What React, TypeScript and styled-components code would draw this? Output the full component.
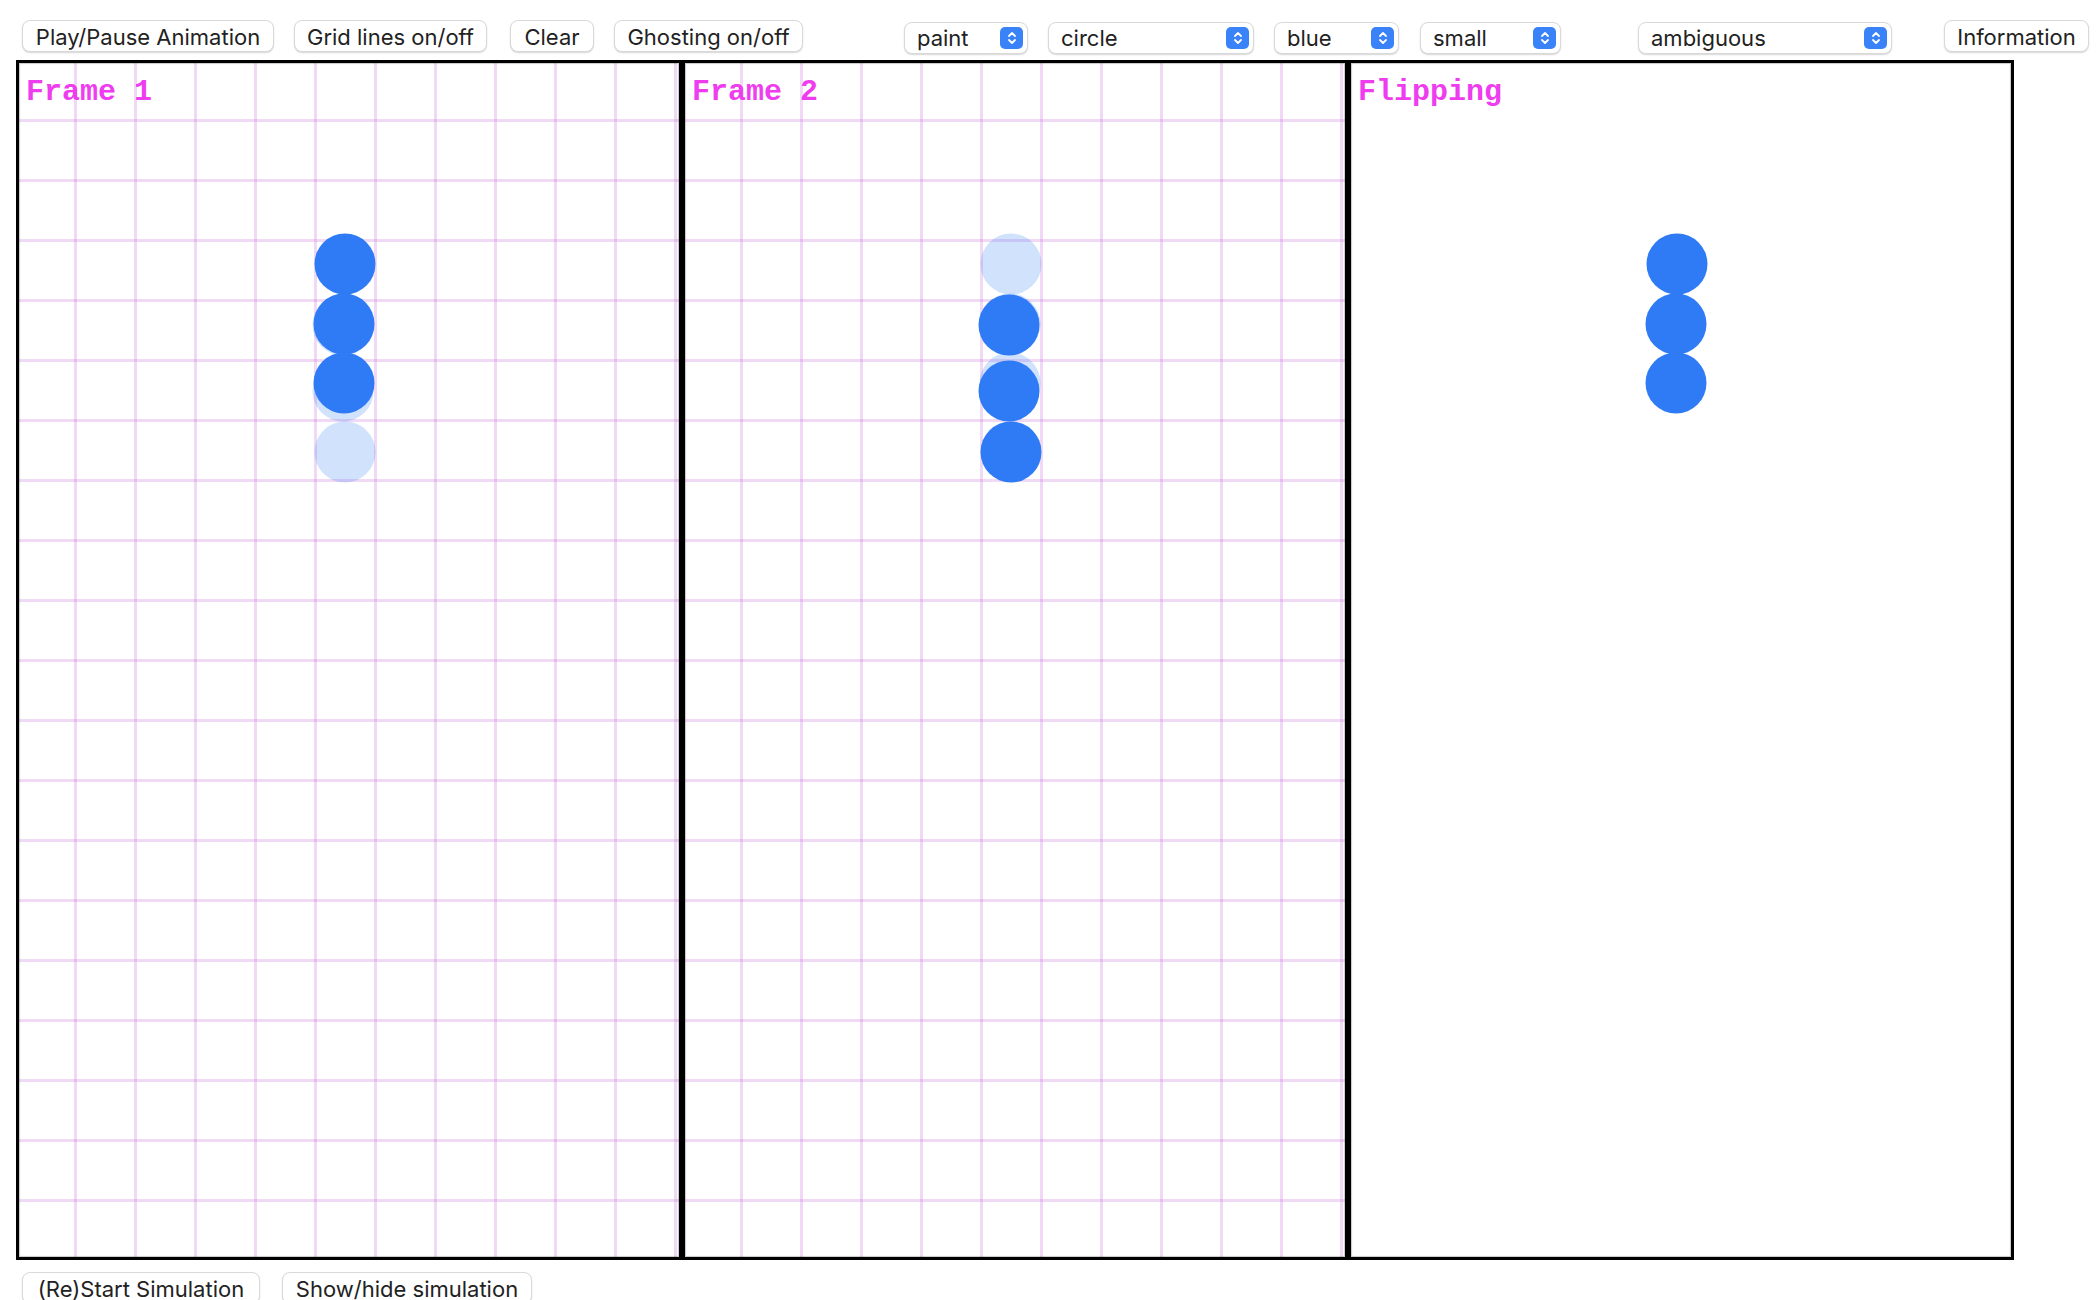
import React from 'react';
import styled, { createGlobalStyle } from 'styled-components';

const Global = createGlobalStyle`
  html, body {
    margin: 0;
    padding: 0;
    background: #ffffff;
  }
  body {
    font-family: Inter, "Liberation Sans", sans-serif;
  }
`;

const Page = styled.div`
  width: 2100px;
  height: 1300px;
  overflow: hidden;
  display: flex;
  flex-direction: column;
`;

const Toolbar = styled.div`
  flex: none;
  display: flex;
  align-items: flex-start;
  gap: 20px;
  padding: 20px 0 0 22px;
  height: 60px;
  box-sizing: border-box;
`;

const Footer = styled.div`
  flex: none;
  display: flex;
  align-items: flex-start;
  gap: 22px;
  padding: 12px 0 0 22px;
`;

const Button = styled.button<{ $w: number; $ml?: number }>`
  flex: none;
  width: ${(p) => p.$w}px;
  height: 32px;
  margin: 0 0 0 ${(p) => p.$ml ?? 0}px;
  padding: 2px 0 0;
  box-sizing: border-box;
  display: flex;
  align-items: center;
  justify-content: center;
  background: #ffffff;
  border: 1px solid #d9d9d9;
  border-radius: 8px;
  box-shadow: 0 1px 1.5px rgba(0, 0, 0, 0.16);
  font-family: Inter, "Liberation Sans", sans-serif;
  font-size: 22px;
  color: #222222;
  white-space: nowrap;
  cursor: pointer;
`;

const SelectWrap = styled.div<{ $w: number; $ml?: number }>`
  position: relative;
  flex: none;
  width: ${(p) => p.$w}px;
  height: 32px;
  margin: 2px 0 0 ${(p) => p.$ml ?? 0}px;
`;

const Select = styled.select`
  appearance: none;
  -webkit-appearance: none;
  width: 100%;
  height: 100%;
  box-sizing: border-box;
  margin: 0;
  padding: 0 0 0 12px;
  background: #ffffff;
  border: 1px solid #d9d9d9;
  border-radius: 8px;
  box-shadow: 0 1px 1.5px rgba(0, 0, 0, 0.16);
  font-family: Inter, "Liberation Sans", sans-serif;
  font-size: 22px;
  color: #222222;
  outline: none;
`;

const Stepper = styled.span`
  position: absolute;
  right: 5px;
  top: 5px;
  width: 23px;
  height: 22px;
  border-radius: 5px;
  background: #3a82f7;
  display: flex;
  align-items: center;
  justify-content: center;
  pointer-events: none;
`;

const Stage = styled.div`
  flex: none;
  display: flex;
  margin-left: 16px;
`;

const gridColor = 'rgba(200, 110, 215, 0.26)';

const Panel = styled.div<{ $grid?: boolean }>`
  position: relative;
  flex: none;
  width: 666px;
  height: 1200px;
  box-sizing: border-box;
  border: 3px solid #000000;
  background-color: #ffffff;
  box-shadow: inset 0 0 1px 1px rgba(0, 0, 0, 0.22);
  background-image: ${(p) =>
    p.$grid
      ? `linear-gradient(to right, ${gridColor} 3px, transparent 3px),
         linear-gradient(to bottom, ${gridColor} 3px, transparent 3px)`
      : 'none'};
  background-size: 60px 60px;
  background-position: 55px 56px;
`;

const Label = styled.span`
  position: absolute;
  left: 7px;
  top: 14px;
  z-index: 1;
  font-family: "Liberation Mono", "DejaVu Sans Mono", monospace;
  font-weight: bold;
  font-size: 30px;
  line-height: 30px;
  color: #ee3dee;
  white-space: pre;
`;

const Drawing = styled.svg`
  position: absolute;
  left: -3px;
  top: -3px;
  width: 666px;
  height: 1200px;
  pointer-events: none;
`;

type Pt = [number, number];

const frame1: Pt[] = [
  [329, 204],
  [328, 264],
  [328, 323],
];
const frame2: Pt[] = [
  [327, 265],
  [327, 331],
  [329, 392],
];

const BLUE = '#2f7bf5';
const GHOST = 'rgba(47, 123, 245, 0.22)';

function StepperIcon() {
  return (
    <svg width="12" height="16" viewBox="0 0 12 16">
      <path d="M3 6 L6 3 L9 6" fill="none" stroke="#fff" strokeWidth="1.8" strokeLinecap="round" strokeLinejoin="round" />
      <path d="M3 10 L6 13 L9 10" fill="none" stroke="#fff" strokeWidth="1.8" strokeLinecap="round" strokeLinejoin="round" />
    </svg>
  );
}

function Dropdown({ w, ml, value, options }: { w: number; ml?: number; value: string; options: string[] }) {
  return (
    <SelectWrap $w={w} $ml={ml}>
      <Select defaultValue={value}>
        {options.map((o) => (
          <option key={o} value={o}>
            {o}
          </option>
        ))}
      </Select>
      <Stepper>
        <StepperIcon />
      </Stepper>
    </SelectWrap>
  );
}

function Dots({ solid, ghost }: { solid: Pt[]; ghost?: Pt[] }) {
  return (
    <Drawing viewBox="0 0 666 1200">
      {ghost?.map(([x, y], i) => (
        <circle key={`g${i}`} cx={x} cy={y} r={30.5} fill={GHOST} />
      ))}
      {solid.map(([x, y], i) => (
        <circle key={`s${i}`} cx={x} cy={y} r={30.5} fill={BLUE} />
      ))}
    </Drawing>
  );
}

export default function App() {
  return (
    <Page>
      <Global />
      <Toolbar>
        <Button $w={252}>Play/Pause Animation</Button>
        <Button $w={193}>Grid lines on/off</Button>
        <Button $w={84} $ml={3}>Clear</Button>
        <Button $w={189}>Ghosting on/off</Button>
        <Dropdown w={124} ml={81} value="paint" options={['paint', 'erase']} />
        <Dropdown w={206} value="circle" options={['circle', 'square']} />
        <Dropdown w={125} value="blue" options={['blue', 'red', 'green', 'black']} />
        <Dropdown w={141} ml={1} value="small" options={['small', 'medium', 'large']} />
        <Dropdown w={254} ml={57} value="ambiguous" options={['ambiguous', 'unambiguous']} />
        <Button $w={145} $ml={32}>Information</Button>
      </Toolbar>
      <Stage>
        <Panel $grid>
          <Label>Frame 1</Label>
          <Dots solid={frame1} ghost={frame2} />
        </Panel>
        <Panel $grid>
          <Label>Frame 2</Label>
          <Dots solid={frame2} ghost={frame1} />
        </Panel>
        <Panel>
          <Label>Flipping</Label>
          <Dots solid={frame1} />
        </Panel>
      </Stage>
      <Footer>
        <Button $w={238}>(Re)Start Simulation</Button>
        <Button $w={250}>Show/hide simulation</Button>
      </Footer>
    </Page>
  );
}
